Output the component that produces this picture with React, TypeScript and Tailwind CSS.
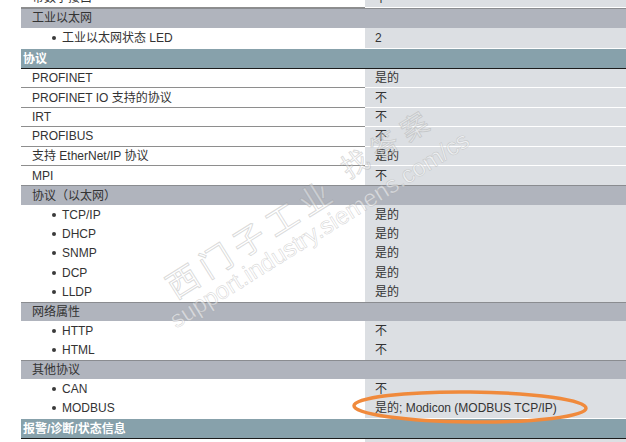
import React from "react";

type Row =
  | { t: "row"; l: string; r: string; nb?: boolean }
  | { t: "sub"; l: string; r: string; tall?: boolean }
  | { t: "group"; l: string }
  | { t: "section"; l: string };

const rows: Row[] = [
  { t: "row", l: "带数字接口", r: "不" },
  { t: "group", l: "工业以太网" },
  { t: "sub", l: "工业以太网状态 LED", r: "2", tall: true },
  { t: "section", l: "协议" },
  { t: "row", l: "PROFINET", r: "是的" },
  { t: "row", l: "PROFINET IO 支持的协议", r: "不" },
  { t: "row", l: "IRT", r: "不" },
  { t: "row", l: "PROFIBUS", r: "不" },
  { t: "row", l: "支持 EtherNet/IP 协议", r: "是的" },
  { t: "row", l: "MPI", r: "不", nb: true },
  { t: "group", l: "协议（以太网）" },
  { t: "sub", l: "TCP/IP", r: "是的" },
  { t: "sub", l: "DHCP", r: "是的" },
  { t: "sub", l: "SNMP", r: "是的" },
  { t: "sub", l: "DCP", r: "是的" },
  { t: "sub", l: "LLDP", r: "是的" },
  { t: "group", l: "网络属性" },
  { t: "sub", l: "HTTP", r: "不" },
  { t: "sub", l: "HTML", r: "不" },
  { t: "group", l: "其他协议" },
  { t: "sub", l: "CAN", r: "不" },
  { t: "sub", l: "MODBUS", r: "是的; Modicon (MODBUS TCP/IP)" },
  { t: "section", l: "报警/诊断/状态信息" },
  { t: "row", l: "", r: "" },
];

function RowView({ row }: { row: Row }) {
  if (row.t === "group") {
    return (
      <div className="flex h-[19.4px] items-center border-t border-[#8a8c90] bg-[#b0b4bd] pl-[11px]">
        {row.l}
      </div>
    );
  }
  if (row.t === "section") {
    return (
      <div className="flex h-[21px] items-center border-t border-b border-t-white border-b-[#1c1c1c] bg-[#87a1ab] pl-[2px] font-bold text-white">
        {row.l}
      </div>
    );
  }
  if (row.t === "sub") {
    return (
      <div className={row.tall ? "flex h-[20.4px]" : "flex h-[19.4px]"}>
        <div className="flex w-[344px] items-center gap-[6px] bg-white pl-[31px]">
          <span className="h-[4px] w-[4px] rounded-full bg-[#3a3a3a]" />
          <span>{row.l}</span>
        </div>
        <div className="flex flex-1 items-center bg-[#dcdfe3] pl-[10px]">{row.r}</div>
      </div>
    );
  }
  return (
    <div className="flex h-[19.4px]">
      <div
        className={
          row.nb
            ? "flex w-[344px] items-center bg-white pl-[11px]"
            : "flex w-[344px] items-center border-b border-[#8e8e8e] bg-white pl-[11px]"
        }
      >
        {row.l}
      </div>
      <div
        className={
          row.nb
            ? "flex flex-1 items-center bg-[#dcdfe3] pl-[10px]"
            : "flex flex-1 items-center border-b border-white bg-[#dcdfe3] pl-[10px]"
        }
      >
        {row.r}
      </div>
    </div>
  );
}

export default function App() {
  return (
    <div className="relative h-[442px] w-[626px] overflow-hidden bg-white pl-[21px] font-['Liberation_Sans','Noto_Sans_CJK_SC',sans-serif] text-[12px] text-[#333]">
      <div className="-mt-[11.1px] flex flex-col">
        {rows.map((r, i) => (
          <RowView key={i} row={r} />
        ))}
      </div>

      {/* watermark */}
      <div className="pointer-events-none absolute inset-0">
        <span className="absolute left-[168px] top-[268px] origin-left rotate-[-32deg] whitespace-nowrap font-['Noto_Sans_CJK_SC',sans-serif] text-[32px] leading-[40px] tracking-[7px] text-white/40 [-webkit-text-stroke:1px_rgba(150,150,150,0.35)]">
          西门子工业
        </span>
        <span className="absolute left-[172px] top-[308px] origin-left rotate-[-32deg] whitespace-nowrap font-['Liberation_Sans',sans-serif] text-[24px] leading-[28px] text-white/50 [-webkit-text-stroke:0.7px_rgba(150,150,150,0.35)]">
          support.industry.siemens.com/cs
        </span>
        <span className="absolute left-[343px] top-[152px] origin-left rotate-[-32deg] whitespace-nowrap font-['Noto_Sans_CJK_SC',sans-serif] text-[27px] leading-[36px] tracking-[8px] text-white/40 [-webkit-text-stroke:1px_rgba(150,150,150,0.35)]">
          找答案
        </span>
      </div>

      {/* highlight ellipse */}
      <svg
        className="pointer-events-none absolute left-[350px] top-[388px]"
        width="242"
        height="38"
        viewBox="0 0 242 38"
      >
        <ellipse
          cx="120"
          cy="19"
          rx="116"
          ry="15"
          fill="none"
          stroke="#f08a3c"
          strokeWidth="3.5"
          transform="rotate(0.6 120 19)"
        />
      </svg>
    </div>
  );
}
